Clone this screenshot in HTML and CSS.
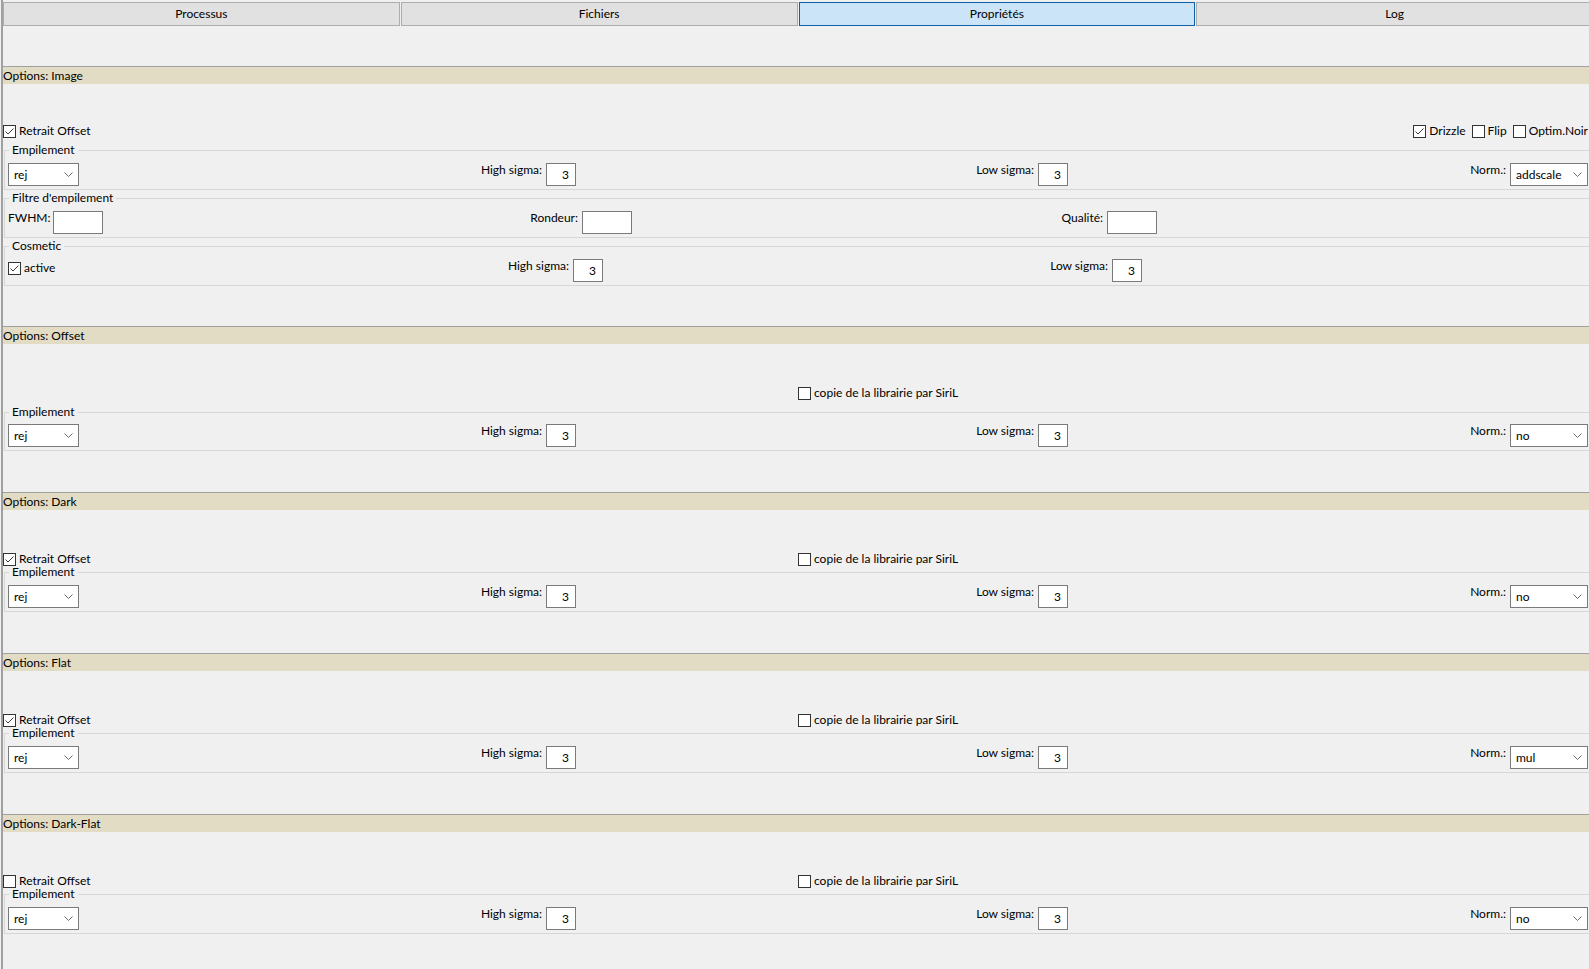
FILE: index.html
```html
<!DOCTYPE html>
<html lang="fr">
<head>
<meta charset="utf-8">
<title>Propriétés</title>
<link rel="stylesheet" href="styles.css">
</head>
<body>
<div class="app">
  <nav class="tabs">
    <div class="tab">Processus</div>
    <div class="tab">Fichiers</div>
    <div class="tab active">Propriétés</div>
    <div class="tab">Log</div>
  </nav>

  <!-- Options: Image -->
  <section class="sec sec-image">
    <div class="sec-head">Options: Image</div>
    <div class="row-top">
      <label class="cbl"><span class="cb"><svg viewBox="0 0 11 11"><path d="M1.5 5.5 L4 8 L9.5 2.5"/></svg></span>Retrait Offset</label>
      <div class="opts">
        <label class="cbl"><span class="cb"><svg viewBox="0 0 11 11"><path d="M1.5 5.5 L4 8 L9.5 2.5"/></svg></span>Drizzle</label>
        <label class="cbl"><span class="cb"></span>Flip</label>
        <label class="cbl"><span class="cb"></span>Optim.Noir</label>
      </div>
    </div>
    <fieldset class="grp grp-a">
      <legend>Empilement</legend>
      <div class="g4">
        <div class="dd"><span>rej</span><svg class="chev" viewBox="0 0 9 5"><path d="M0.5 0.5 L4.5 4.5 L8.5 0.5"/></svg></div>
        <div class="fld"><span class="lbl">High sigma:</span><span class="num">3</span></div>
        <div class="fld"><span class="lbl">Low sigma:</span><span class="num">3</span></div>
        <div class="fld"><span class="lbl">Norm.:</span><div class="dd dd-norm"><span>addscale</span><svg class="chev" viewBox="0 0 9 5"><path d="M0.5 0.5 L4.5 4.5 L8.5 0.5"/></svg></div></div>
      </div>
    </fieldset>
    <fieldset class="grp">
      <legend>Filtre d'empilement</legend>
      <div class="gf">
        <div class="fld fld-start"><span class="lbl lbl-tight">FWHM:</span><span class="txt"></span></div>
        <div class="fld"><span class="lbl">Rondeur:</span><span class="txt"></span></div>
        <div class="fld"><span class="lbl">Qualité:</span><span class="txt"></span></div>
      </div>
    </fieldset>
    <fieldset class="grp">
      <legend>Cosmetic</legend>
      <div class="gc">
        <label class="cbl cbl-top"><span class="cb"><svg viewBox="0 0 11 11"><path d="M1.5 5.5 L4 8 L9.5 2.5"/></svg></span>active</label>
        <div class="fld"><span class="lbl">High sigma:</span><span class="num">3</span></div>
        <div class="fld"><span class="lbl">Low sigma:</span><span class="num">3</span></div>
      </div>
    </fieldset>
  </section>

  <!-- Options: Offset -->
  <section class="sec sec-offset">
    <div class="sec-head">Options: Offset</div>
    <div class="row-2col row-offset">
      <span></span>
      <label class="cbl"><span class="cb"></span>copie de la librairie par SiriL</label>
    </div>
    <fieldset class="grp grp-a grp-offset">
      <legend>Empilement</legend>
      <div class="g4">
        <div class="dd"><span>rej</span><svg class="chev" viewBox="0 0 9 5"><path d="M0.5 0.5 L4.5 4.5 L8.5 0.5"/></svg></div>
        <div class="fld"><span class="lbl">High sigma:</span><span class="num">3</span></div>
        <div class="fld"><span class="lbl">Low sigma:</span><span class="num">3</span></div>
        <div class="fld"><span class="lbl">Norm.:</span><div class="dd dd-norm"><span>no</span><svg class="chev" viewBox="0 0 9 5"><path d="M0.5 0.5 L4.5 4.5 L8.5 0.5"/></svg></div></div>
      </div>
    </fieldset>
  </section>

  <!-- Options: Dark -->
  <section class="sec sec-std">
    <div class="sec-head">Options: Dark</div>
    <div class="row-2col row-std">
      <label class="cbl"><span class="cb"><svg viewBox="0 0 11 11"><path d="M1.5 5.5 L4 8 L9.5 2.5"/></svg></span>Retrait Offset</label>
      <label class="cbl"><span class="cb"></span>copie de la librairie par SiriL</label>
    </div>
    <fieldset class="grp grp-b">
      <legend>Empilement</legend>
      <div class="g4">
        <div class="dd"><span>rej</span><svg class="chev" viewBox="0 0 9 5"><path d="M0.5 0.5 L4.5 4.5 L8.5 0.5"/></svg></div>
        <div class="fld"><span class="lbl">High sigma:</span><span class="num">3</span></div>
        <div class="fld"><span class="lbl">Low sigma:</span><span class="num">3</span></div>
        <div class="fld"><span class="lbl">Norm.:</span><div class="dd dd-norm"><span>no</span><svg class="chev" viewBox="0 0 9 5"><path d="M0.5 0.5 L4.5 4.5 L8.5 0.5"/></svg></div></div>
      </div>
    </fieldset>
  </section>

  <!-- Options: Flat -->
  <section class="sec sec-std">
    <div class="sec-head">Options: Flat</div>
    <div class="row-2col row-std">
      <label class="cbl"><span class="cb"><svg viewBox="0 0 11 11"><path d="M1.5 5.5 L4 8 L9.5 2.5"/></svg></span>Retrait Offset</label>
      <label class="cbl"><span class="cb"></span>copie de la librairie par SiriL</label>
    </div>
    <fieldset class="grp grp-b">
      <legend>Empilement</legend>
      <div class="g4">
        <div class="dd"><span>rej</span><svg class="chev" viewBox="0 0 9 5"><path d="M0.5 0.5 L4.5 4.5 L8.5 0.5"/></svg></div>
        <div class="fld"><span class="lbl">High sigma:</span><span class="num">3</span></div>
        <div class="fld"><span class="lbl">Low sigma:</span><span class="num">3</span></div>
        <div class="fld"><span class="lbl">Norm.:</span><div class="dd dd-norm"><span>mul</span><svg class="chev" viewBox="0 0 9 5"><path d="M0.5 0.5 L4.5 4.5 L8.5 0.5"/></svg></div></div>
      </div>
    </fieldset>
  </section>

  <!-- Options: Dark-Flat -->
  <section class="sec sec-std">
    <div class="sec-head">Options: Dark-Flat</div>
    <div class="row-2col row-std">
      <label class="cbl"><span class="cb"></span>Retrait Offset</label>
      <label class="cbl"><span class="cb"></span>copie de la librairie par SiriL</label>
    </div>
    <fieldset class="grp grp-b">
      <legend>Empilement</legend>
      <div class="g4">
        <div class="dd"><span>rej</span><svg class="chev" viewBox="0 0 9 5"><path d="M0.5 0.5 L4.5 4.5 L8.5 0.5"/></svg></div>
        <div class="fld"><span class="lbl">High sigma:</span><span class="num">3</span></div>
        <div class="fld"><span class="lbl">Low sigma:</span><span class="num">3</span></div>
        <div class="fld"><span class="lbl">Norm.:</span><div class="dd dd-norm"><span>no</span><svg class="chev" viewBox="0 0 9 5"><path d="M0.5 0.5 L4.5 4.5 L8.5 0.5"/></svg></div></div>
      </div>
    </fieldset>
  </section>
</div>
</body>
</html>
```

FILE: styles.css
```css
html, body {
  margin: 0;
  padding: 0;
  overflow: hidden;
}

body {
  background: #f0f0f0;
  color: #000;
  font-family: Lato, "Noto Sans", "DejaVu Sans", sans-serif;
  font-size: 12px;
}

.app {
  margin-left: 1px;
  border-left: 2px solid #a0a0a0;
  min-height: 100vh;
}

/* Tabs */
.tabs {
  display: flex;
  gap: 1px;
  padding-top: 2px;
  margin-right: -4px;
}

.tab {
  flex: 1;
  height: 24px;
  box-sizing: border-box;
  border: 1px solid #adadad;
  background: #e1e1e1;
  display: flex;
  align-items: center;
  justify-content: center;
  padding-bottom: 2px;
}

.tab.active {
  border-color: #0f5fa8;
  background: #cce4f7;
}

/* Sections */
.sec-image { margin-top: 40px; }
.sec-offset { margin-top: 40px; }
.sec-std { margin-top: 41px; }

.sec-head {
  border-top: 1px solid #a0a0a0;
  background: #e2dcc5;
  height: 17px;
  line-height: 17px;
  white-space: nowrap;
}

.row-top {
  margin-top: 39px;
  height: 16px;
  display: flex;
  align-items: center;
  justify-content: space-between;
  padding-right: 1px;
}

.opts {
  display: flex;
  align-items: center;
  gap: 6px;
}

.row-2col {
  height: 16px;
  display: grid;
  grid-template-columns: 795fr 791fr;
  align-items: center;
}

.row-offset { margin-top: 41px; }
.row-std { margin-top: 41px; }

/* Checkbox */
.cbl {
  display: inline-flex;
  align-items: center;
  gap: 3px;
  line-height: 16px;
  white-space: nowrap;
}

.cbl-top {
  align-self: start;
  margin-top: 1px;
}

.cb {
  width: 13px;
  height: 13px;
  box-sizing: border-box;
  border: 1px solid #333;
  background: #fff;
  display: inline-block;
  flex: none;
}

.cb svg {
  display: block;
  width: 11px;
  height: 11px;
  fill: none;
  stroke: #3c3c3c;
  stroke-width: 1;
}

/* Group boxes */
.grp {
  margin: 0 0 0 1px;
  padding: 5px 1px 3px 3px;
  border: 1px solid #d7d7d7;
  border-right: none;
  min-width: 0;
}

.grp legend {
  padding: 0 3px;
  margin-left: 1px;
  line-height: 16px;
}

.grp-a { margin-top: 3px; }
.grp-offset { padding-top: 4px; }
.grp-b { margin-top: -3px; padding-top: 5px; }

.g4 {
  display: grid;
  grid-template-columns: 80px 488fr 492fr 520fr;
}

.gf {
  display: grid;
  grid-template-columns: 110px 514fr 525fr 431fr;
}

.gc {
  display: grid;
  grid-template-columns: 100px 495fr 539fr 446fr;
}

.fld {
  display: flex;
  align-items: flex-start;
  gap: 4px;
  justify-self: end;
  white-space: nowrap;
}

.fld-start { justify-self: start; }

.lbl {
  line-height: 13px;
}

.lbl-tight { margin-right: -2px; }

.num,
.txt {
  height: 23px;
  box-sizing: border-box;
  border: 1px solid #7a7a7a;
  background: #fff;
  line-height: 21px;
}

.num {
  width: 30px;
  text-align: right;
  padding-right: 6px;
}

.txt {
  width: 50px;
}

/* Dropdowns */
.dd {
  width: 71px;
  height: 23px;
  box-sizing: border-box;
  border: 1px solid #7a7a7a;
  background: #fff;
  display: flex;
  align-items: center;
  justify-content: space-between;
  padding: 0 5px 0 5px;
  line-height: 21px;
}

.dd-norm {
  width: 78px;
}

.chev {
  width: 9px;
  height: 5px;
  fill: none;
  stroke: #6a6a6a;
  stroke-width: 1;
  flex: none;
}
```
